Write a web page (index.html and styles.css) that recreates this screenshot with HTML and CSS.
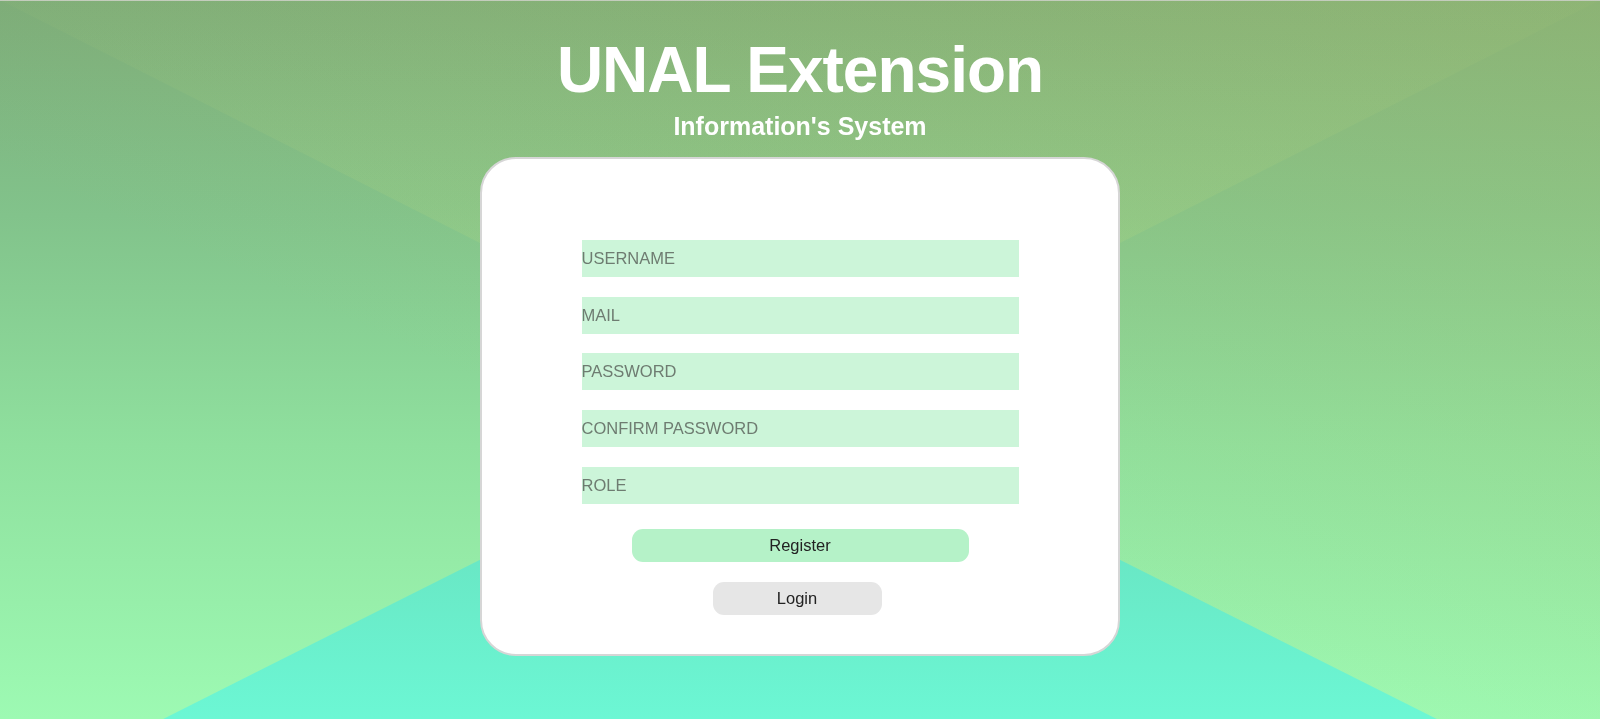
FILE: index.html
```html
<!DOCTYPE html>
<html lang="en">
<head>
<meta charset="utf-8">
<title>UNAL Extension</title>
<link rel="stylesheet" href="styles.css">
</head>
<body>
<div class="bg">
  <div class="bg-top"></div>
  <div class="bg-bottom"></div>
</div>
<main class="page">
  <h1 class="title">UNAL Extension</h1>
  <h2 class="subtitle">Information's System</h2>
  <section class="card">
    <form class="form">
      <input class="field" type="text" placeholder="USERNAME">
      <input class="field" type="email" placeholder="MAIL">
      <input class="field" type="password" placeholder="PASSWORD">
      <input class="field" type="password" placeholder="CONFIRM PASSWORD">
      <input class="field" type="text" placeholder="ROLE">
      <button class="btn btn-register" type="button">Register</button>
      <button class="btn btn-login" type="button">Login</button>
    </form>
  </section>
</main>
</body>
</html>
```

FILE: styles.css
```css
html, body {
  margin: 0;
  padding: 0;
}

body {
  font-family: "Liberation Sans", Arial, Helvetica, sans-serif;
  min-height: 100vh;
  overflow: hidden;
}

.bg {
  position: fixed;
  inset: 0;
  z-index: -1;
  background:
    linear-gradient(to bottom left, rgba(185, 200, 105, 0.28), rgba(185, 200, 105, 0) 62%),
    linear-gradient(to bottom, #7bab79 0%, #82c38b 30%, #8fe09e 62%, #9dfab3 100%);
  box-shadow: inset 0 1px 0 #c3ccbf;
}

.bg-top {
  position: absolute;
  left: 0;
  top: 0;
  width: 100%;
  height: 405px;
  clip-path: polygon(0 0, 100% 0, 50% 100%);
  background: linear-gradient(to bottom, rgba(205, 225, 120, 0.03), rgba(205, 225, 120, 0.2));
}

.bg-bottom {
  position: absolute;
  left: 0;
  bottom: 0;
  width: 100%;
  height: 320px;
  clip-path: polygon(10.2% 100%, 50% 0, 89.8% 100%);
  background: linear-gradient(to bottom, #66d8b6, #6cf7d4);
}

.page {
  display: flex;
  flex-direction: column;
  align-items: center;
  padding-top: 38px;
}

.title {
  margin: 0;
  font-size: 64px;
  line-height: 64px;
  letter-spacing: -1px;
  font-weight: bold;
  color: #ffffff;
}

.subtitle {
  margin: 12px 0 0;
  font-size: 25px;
  line-height: 25px;
  font-weight: bold;
  color: #ffffff;
}

.card {
  margin-top: 18px;
  width: 640px;
  box-sizing: border-box;
  background: #ffffff;
  border: 2px solid #d6d6d6;
  border-radius: 36px;
  padding: 81px 0 39px;
}

.form {
  display: flex;
  flex-direction: column;
  align-items: center;
  gap: 19.67px;
  margin: 0;
}

.field {
  width: 437px;
  height: 37px;
  box-sizing: border-box;
  border: none;
  outline: none;
  padding: 0;
  margin: 0;
  background: #ccf5d9;
  font-family: "Liberation Sans", Arial, sans-serif;
  font-size: 16.5px;
  color: #5f6d62;
}

.field::placeholder {
  color: #6e7c71;
  opacity: 1;
}

.btn {
  height: 33px;
  border: none;
  border-radius: 11px;
  font-family: "Liberation Sans", Arial, sans-serif;
  font-size: 16.5px;
  color: #222222;
  padding: 0;
  cursor: pointer;
}

.btn-register {
  width: 337px;
  margin-top: 5.6px;
  background: #b5f2c8;
}

.btn-login {
  width: 169px;
  margin-right: 6px;
  background: #e6e6e6;
}
```
